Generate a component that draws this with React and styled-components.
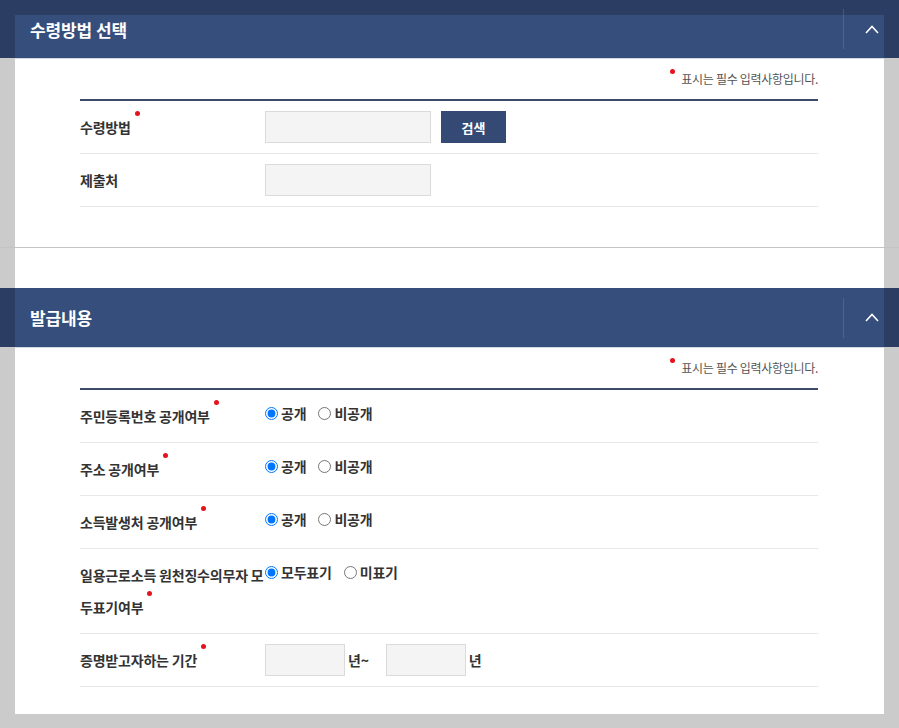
import React from 'react';
import styled, { createGlobalStyle } from 'styled-components';

const GlobalStyle = createGlobalStyle`
  html, body {
    margin: 0;
    padding: 0;
    background: #cbcbcb;
    font-family: 'Noto Sans CJK KR', 'Noto Sans', sans-serif;
  }
  * { box-sizing: border-box; }
`;

const Page = styled.div`
  width: 100%;
  min-height: 728px;
  background: #cbcbcb;
`;

const Section = styled.section`
  padding: 0 15px;
`;

// full-width bar: darker where it sits over the grey page, lighter over the white panel
const Header = styled.div`
  margin: 0 -15px;
  height: ${({ $height }) => $height}px;
  display: flex;
  align-items: center;
  padding-left: 30px;
  background:
    linear-gradient(#354e7b, #354e7b) 15px ${({ $inset }) => $inset}px / calc(100% - 30px) 100% no-repeat,
    #2b3d62;
`;

const Title = styled.h2`
  flex: 1;
  margin: 0;
  color: #fff;
  font-size: 17px;
  font-weight: 700;
  letter-spacing: -0.1px;
`;

const Toggle = styled.button`
  width: 56px;
  height: 40px;
  padding: 0;
  display: flex;
  align-items: center;
  justify-content: center;
  background: transparent;
  border: 0;
  border-left: 1px solid rgba(255, 255, 255, 0.13);
  cursor: pointer;
`;

const Spacer = styled.div`
  height: 40px;
  background: #fff;
`;

const Rule = styled.hr`
  margin: 0;
  border: 0;
  border-top: 1px solid #c4c4c4;
`;

const Body = styled.div`
  background: #fff;
  border-top: 1px solid #d3d9e3;
  padding: 10px 66px ${({ $bottom }) => $bottom}px 65px;
`;

const Note = styled.p`
  margin: 0 0 10px;
  text-align: right;
  line-height: 20px;
  font-size: 12px;
  color: #555;
  letter-spacing: -0.3px;
`;

const Req = styled.span`
  display: inline-block;
  width: 5px;
  height: 5px;
  border-radius: 50%;
  background: #e5131d;
  vertical-align: top;
  margin: 0 ${({ $note }) => ($note ? '6px' : '0')} 0 ${({ $note }) => ($note ? '0' : '4px')};
`;

const Table = styled.div`
  border-top: 2px solid #3b4a67;
`;

const Row = styled.div`
  display: flex;
  align-items: flex-start;
  padding: 10px 0;
  border-bottom: 1px solid #e8e8e8;
`;

const Label = styled.div`
  flex: 0 0 185px;
  line-height: 32px;
  font-size: 14px;
  font-weight: 700;
  color: #333;
  letter-spacing: -0.2px;
  white-space: nowrap;
`;

const Value = styled.div`
  display: flex;
  align-items: center;
  min-height: ${({ $h }) => $h || 32}px;
  gap: ${({ $gap }) => $gap || 0}px;
`;

const Field = styled.input`
  width: ${({ $w }) => $w}px;
  height: 32px;
  margin: 0;
  border: 1px solid #dadada;
  background: #f4f4f4;
  outline: none;
`;

const SearchButton = styled.button`
  width: 65px;
  height: 32px;
  border: 0;
  background: #344a75;
  color: #fff;
  font-family: inherit;
  font-size: 13px;
  font-weight: 700;
`;

const Unit = styled.span`
  margin: 0 ${({ $last }) => ($last ? 0 : 17)}px 0 3px;
  font-size: 14px;
  font-weight: 700;
  color: #333;
  letter-spacing: -0.2px;
`;

const Option = styled.label`
  display: inline-flex;
  align-items: center;
  margin-right: 12px;
  font-size: 14px;
  font-weight: 700;
  color: #333;
  letter-spacing: -0.2px;

  input {
    width: 13px;
    height: 13px;
    margin: 0 3px 0 0;
  }
`;

const Chevron = () => (
  <svg width="14" height="9" viewBox="0 0 14 9">
    <polyline points="1,8 7,1.5 13,8" fill="none" stroke="#fff" strokeWidth="1.6" />
  </svg>
);

const RadioPair = ({ name, options }) => (
  <Value $h={26}>
    {options.map((opt, i) => (
      <Option key={opt}>
        <input type="radio" name={name} defaultChecked={i === 0} />
        {opt}
      </Option>
    ))}
  </Value>
);

const disclose = ['공개', '비공개'];

function App() {
  return (
    <Page>
      <GlobalStyle />
      <Section>
        <Header $height={58} $inset={15}>
          <Title>수령방법 선택</Title>
          <Toggle aria-label="접기"><Chevron /></Toggle>
        </Header>
        <Body $bottom={40}>
          <Note><Req $note />표시는 필수 입력사항입니다.</Note>
          <Table>
            <Row>
              <Label>수령방법<Req /></Label>
              <Value $gap={10}>
                <Field $w={166} readOnly />
                <SearchButton>검색</SearchButton>
              </Value>
            </Row>
            <Row>
              <Label>제출처</Label>
              <Value>
                <Field $w={166} readOnly />
              </Value>
            </Row>
          </Table>
        </Body>
      </Section>
      <Rule />
      <Section>
        <Spacer />
        <Header $height={59} $inset={0}>
          <Title>발급내용</Title>
          <Toggle aria-label="접기"><Chevron /></Toggle>
        </Header>
        <Body $bottom={27}>
          <Note><Req $note />표시는 필수 입력사항입니다.</Note>
          <Table>
            <Row>
              <Label>주민등록번호 공개여부<Req /></Label>
              <RadioPair name="rrn" options={disclose} />
            </Row>
            <Row>
              <Label>주소 공개여부<Req /></Label>
              <RadioPair name="addr" options={disclose} />
            </Row>
            <Row>
              <Label>소득발생처 공개여부<Req /></Label>
              <RadioPair name="source" options={disclose} />
            </Row>
            <Row>
              <Label>
                일용근로소득 원천징수의무자 모
                <br />
                두표기여부<Req />
              </Label>
              <RadioPair name="daily" options={['모두표기', '미표기']} />
            </Row>
            <Row>
              <Label>증명받고자하는 기간<Req /></Label>
              <Value>
                <Field $w={80} readOnly />
                <Unit>년~</Unit>
                <Field $w={80} readOnly />
                <Unit $last>년</Unit>
              </Value>
            </Row>
          </Table>
        </Body>
      </Section>
    </Page>
  );
}

export default App;
